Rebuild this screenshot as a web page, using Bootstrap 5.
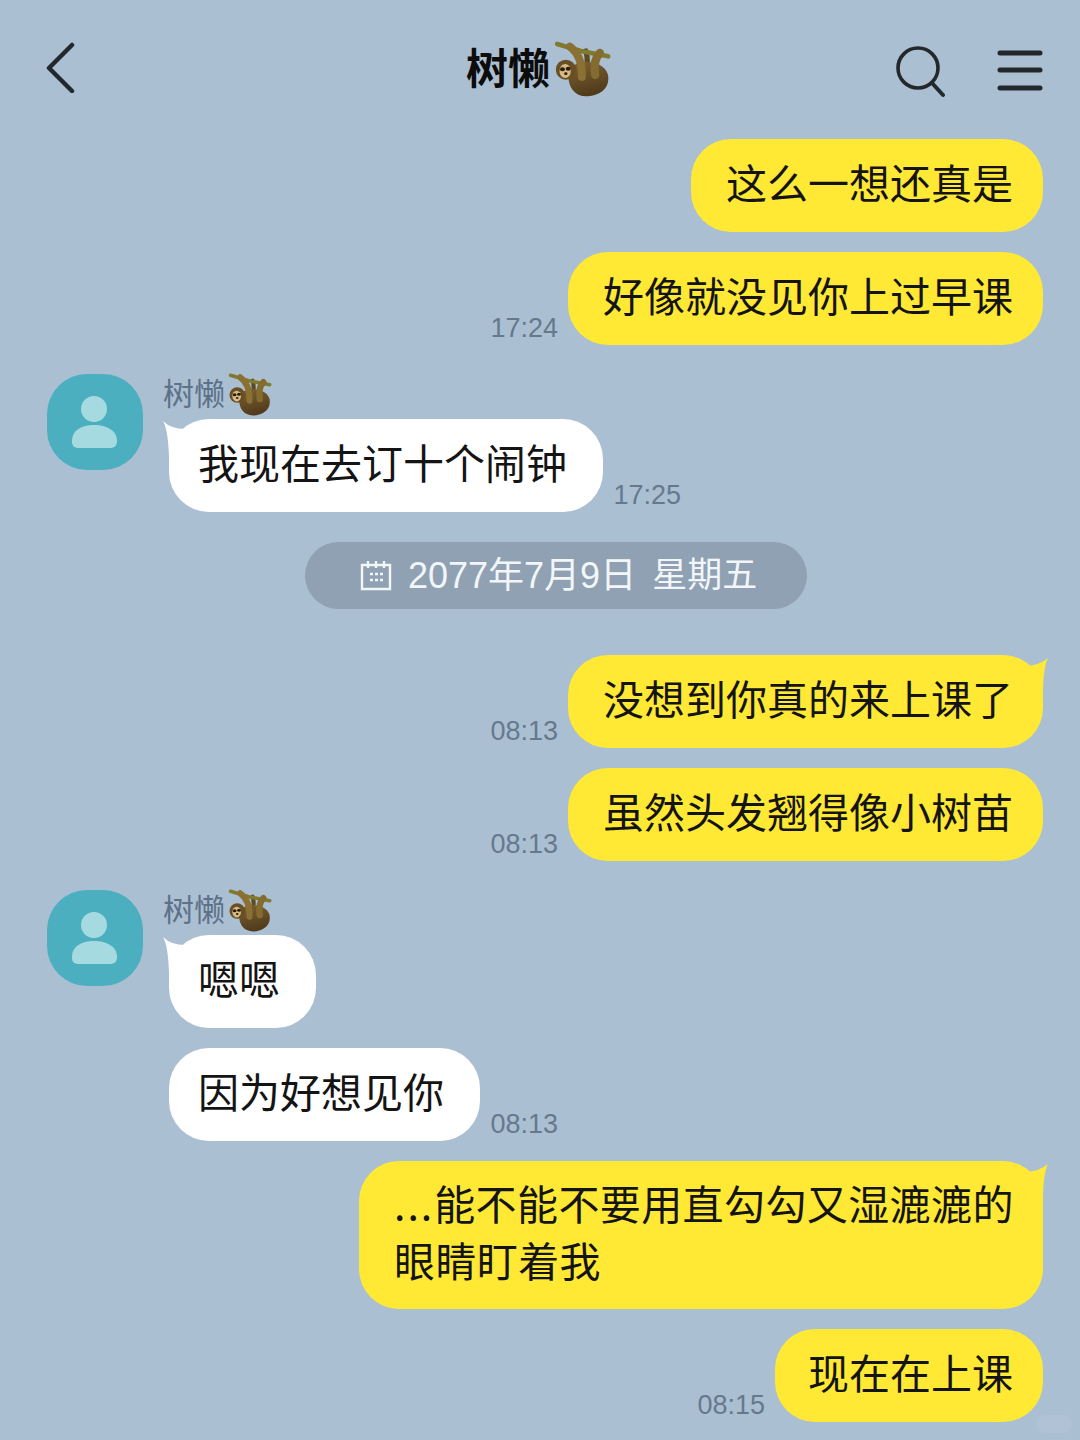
<!DOCTYPE html>
<html lang="zh-CN">
<head>
    <meta charset="UTF-8">
    <meta name="viewport" content="width=device-width, initial-scale=1.0">
    <title>树懒</title>
    <link rel="stylesheet" href="https://cdn.jsdelivr.net/npm/bootstrap@5.3.0/dist/css/bootstrap.min.css">
    <script src="https://cdn.jsdelivr.net/npm/bootstrap@5.3.0/dist/js/bootstrap.bundle.min.js"></script>
    <style>
        html, body {
            height: 1440px;
            overflow: hidden;
        }
        body {
            background: #abbfd3;
            color: #111;
            font-family: "Liberation Sans", "Noto Sans CJK SC", sans-serif;
        }
        .chat-head {
            height: 139px;
            padding: 41px 37px 0 46px;
        }
        .head-back {
            margin-right: 390px;
        }
        .head-title {
            font-family: "Noto Sans CJK SC", sans-serif;
            font-size: 42px;
            font-weight: 700;
            line-height: 50px;
            color: #0c0c0c;
        }
        .head-sloth {
            width: 57px;
            height: 56px;
            margin-left: 4px;
        }
        .head-icons {
            gap: 52px;
        }
        .search-icon {
            margin-top: 4px;
        }
        .menu-icon {
            margin-top: 9px;
        }
        .msg-row {
            padding-right: 37px;
        }
        .gap-20 { margin-top: 20px; }
        .gap-29 { margin-top: 29px; }
        .gap-46 { margin-top: 46px; }
        .gap-30 { margin-top: 30px; }
        .bubble {
            position: relative;
            font-family: "Noto Sans CJK SC", sans-serif;
            font-size: 41px;
            line-height: 57px;
            padding: 14px 30px 22px 35px;
            border-radius: 40px;
            background: #ffe934;
            color: #141414;
        }
        .bubble-multi {
            width: 684px;
            padding-top: 13px;
            padding-bottom: 21px;
            letter-spacing: 0.4px;
            white-space: nowrap;
        }
        .bubble-short {
            padding-left: 33px;
        }
        .bubble-in {
            background: #fff;
            padding: 14px 35.5px 22px 29px;
            margin-left: 6px;
        }
        .dots {
            letter-spacing: 2px;
        }
        .tail-right::after,
        .tail-left::before {
            content: "";
            position: absolute;
            width: 22px;
            height: 36px;
            background: inherit;
        }
        .tail-right::after {
            right: -5px;
            top: 3px;
            clip-path: path("M0 8 Q14 7 22 0 Q17 10 17 36 L0 36 Z");
        }
        .tail-left::before {
            left: -6px;
            top: 2px;
            clip-path: path("M22 8 Q8 8 0 0 Q5 8 6 36 L22 36 Z");
        }
        .msg-time {
            font-size: 27px;
            line-height: 30px;
            color: #66798c;
            margin-right: 10px;
            margin-bottom: 2px;
        }
        .msg-time-in {
            margin-left: 11px;
            margin-right: 0;
        }
        .avatar {
            width: 96px;
            height: 96px;
            border-radius: 40px;
            background: #4cafbf;
            margin: 0 20px 0 47px;
        }
        .sender {
            height: 45px;
            font-family: "Noto Sans CJK SC", sans-serif;
            font-size: 31px;
            line-height: 35px;
            color: #5d7287;
        }
        .sender-sloth {
            width: 44px;
            height: 43px;
            margin-left: 3px;
            margin-top: -1px;
        }
        .date-pill {
            margin-left: 305px;
            width: 502px;
            height: 67px;
            border-radius: 34px;
            background: #8fa1b2;
            color: #f3f6f9;
            gap: 16px;
            padding-left: 55px;
        }
        .date-day {
            font-size: 36px;
        }
        .date-week {
            font-size: 35px;
        }
        .wm-pill {
            position: absolute;
            right: 8px;
            bottom: 7px;
            width: 36px;
            height: 18px;
            border-radius: 9px;
            background: rgba(255, 255, 255, 0.07);
        }
    </style>
</head>
<body>
<svg width="0" height="0" class="position-absolute">
    <defs>
        <linearGradient id="furBody" x1="0" y1="0" x2="0.3" y2="1">
            <stop offset="0" stop-color="#7d6231"/>
            <stop offset="1" stop-color="#513b1c"/>
        </linearGradient>
        <symbol id="sloth" viewBox="45 0 170 168">
            <path d="M140 30 C148 55 145 75 135 95" fill="none" stroke="#5c4a22" stroke-width="16" stroke-linecap="round"/>
            <path d="M88 95 C92 55 190 48 206 100 C216 148 172 166 142 166 C102 166 84 132 88 95 Z" fill="url(#furBody)"/>
            <path d="M54 9 L125 30 L207 46" fill="none" stroke="#7f7a2e" stroke-width="14" stroke-linecap="round"/>
            <path d="M92 17 C116 35 130 62 128 108" fill="none" stroke="#8a7133" stroke-width="24" stroke-linecap="round"/>
            <path d="M182 36 C168 50 164 75 168 102" fill="none" stroke="#846c30" stroke-width="25" stroke-linecap="round"/>
            <circle cx="80" cy="86" r="30" fill="#6a4e24"/>
            <ellipse cx="78" cy="90" rx="17" ry="21" fill="#d6bc84"/>
            <ellipse cx="70" cy="85" rx="7.5" ry="6" fill="#2b1c0e"/>
            <ellipse cx="87" cy="83" rx="7.5" ry="6" fill="#2b1c0e"/>
            <ellipse cx="80" cy="98" rx="5" ry="4" fill="#2b1c0e"/>
        </symbol>
    </defs>
</svg>

<header class="chat-head d-flex">
    <svg width="30" height="52" viewBox="0 0 30 52" class="head-back">
        <path d="M26 4 L3 27 L26 50" fill="none" stroke="#23282d" stroke-width="4.5" stroke-linecap="round" stroke-linejoin="round"/>
    </svg>
    <div class="d-flex align-items-start">
        <span class="head-title">树懒</span>
        <svg class="head-sloth"><use href="#sloth"/></svg>
    </div>
    <div class="head-icons d-flex align-items-start ms-auto">
        <svg width="50" height="54" viewBox="0 0 50 54" class="search-icon">
            <circle cx="23" cy="23" r="20" fill="none" stroke="#23282d" stroke-width="3.6"/>
            <path d="M37 38 L48 50" stroke="#23282d" stroke-width="4" stroke-linecap="round"/>
        </svg>
        <svg width="46" height="44" viewBox="0 0 46 44" class="menu-icon">
            <path d="M3 3 H43 M3 20 H43 M3 38 H43" stroke="#23282d" stroke-width="5" stroke-linecap="round"/>
        </svg>
    </div>
</header>

<main>
    <div class="msg-row d-flex justify-content-end align-items-end">
        <div class="bubble">这么一想还真是</div>
    </div>
    <div class="msg-row gap-20 d-flex justify-content-end align-items-end">
        <span class="msg-time">17:24</span>
        <div class="bubble">好像就没见你上过早课</div>
    </div>

    <div class="gap-29 d-flex align-items-start">
        <svg class="avatar flex-shrink-0" viewBox="0 0 96 96">
            <circle cx="47" cy="35" r="13" fill="#a5dbe0"/>
            <path d="M25 67 C25 56 35 51 47 51 C59 51 70 56 70 67 C70 72 67 74 63 74 H32 C27 74 25 72 25 67 Z" fill="#a5dbe0"/>
        </svg>
        <div>
            <div class="sender d-flex align-items-start">树懒<svg class="sender-sloth"><use href="#sloth"/></svg></div>
            <div class="d-flex align-items-end">
                <div class="bubble bubble-in tail-left">我现在去订十个闹钟</div>
                <span class="msg-time msg-time-in">17:25</span>
            </div>
        </div>
    </div>

    <div class="date-pill gap-30 d-flex align-items-center">
        <svg width="32" height="31" viewBox="0 0 32 31">
            <path d="M2 5 H30 V29 H2 Z M8 1 V8 M16 1 V8 M24 1 V8" fill="none" stroke="#f3f6f9" stroke-width="2.4"/>
            <path d="M10 14 H13 M15 14 H18 M20 14 H23 M10 20 H13 M15 20 H18 M20 20 H23" stroke="#f3f6f9" stroke-width="2.6"/>
        </svg>
        <span class="date-day">2077年7月9日</span>
        <span class="date-week">星期五</span>
    </div>

    <div class="msg-row gap-46 d-flex justify-content-end align-items-end">
        <span class="msg-time">08:13</span>
        <div class="bubble tail-right">没想到你真的来上课了</div>
    </div>
    <div class="msg-row gap-20 d-flex justify-content-end align-items-end">
        <span class="msg-time">08:13</span>
        <div class="bubble">虽然头发翘得像小树苗</div>
    </div>

    <div class="gap-29 d-flex align-items-start">
        <svg class="avatar flex-shrink-0" viewBox="0 0 96 96">
            <circle cx="47" cy="35" r="13" fill="#a5dbe0"/>
            <path d="M25 67 C25 56 35 51 47 51 C59 51 70 56 70 67 C70 72 67 74 63 74 H32 C27 74 25 72 25 67 Z" fill="#a5dbe0"/>
        </svg>
        <div>
            <div class="sender d-flex align-items-start">树懒<svg class="sender-sloth"><use href="#sloth"/></svg></div>
            <div class="d-flex">
                <div class="bubble bubble-in tail-left">嗯嗯</div>
            </div>
            <div class="gap-20 d-flex align-items-end">
                <div class="bubble bubble-in">因为好想见你</div>
                <span class="msg-time msg-time-in">08:13</span>
            </div>
        </div>
    </div>

    <div class="msg-row gap-20 d-flex justify-content-end">
        <div class="bubble bubble-multi tail-right"><span class="dots">...</span>能不能不要用直勾勾又湿漉漉的<br>眼睛盯着我</div>
    </div>
    <div class="msg-row gap-20 d-flex justify-content-end align-items-end">
        <span class="msg-time">08:15</span>
        <div class="bubble bubble-short">现在在上课</div>
    </div>
</main>
<div class="wm-pill"></div>
</body>
</html>
